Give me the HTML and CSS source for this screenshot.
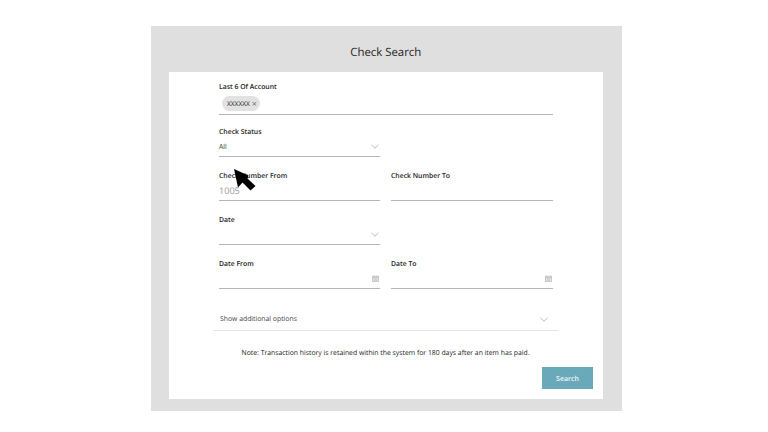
FILE: index.html
```html
<!DOCTYPE html>
<html lang="en">
<head>
<meta charset="utf-8">
<title>Check Search</title>
<link rel="stylesheet" href="styles.css">
</head>
<body>
<main class="panel">
  <h1 class="title">Check Search</h1>
  <section class="card">
    <form class="form">
      <div class="row first">
        <div class="field">
          <div class="label">Last 6 Of Account</div>
          <div class="control"><span class="chip">XXXXXX<span class="chip-x">×</span></span></div>
        </div>
      </div>
      <div class="row half">
        <div class="field">
          <div class="label">Check Status</div>
          <div class="control"><span class="value">All</span>
            <svg class="chev" viewBox="0 0 8 5"><path d="M.5.8 4 4.2 7.5.8"/></svg></div>
        </div>
      </div>
      <div class="row cols">
        <div class="field">
          <div class="label">Check Number From</div>
          <div class="control"><span class="placeholder">1005</span></div>
        </div>
        <div class="field">
          <div class="label">Check Number To</div>
          <div class="control"></div>
        </div>
      </div>
      <div class="row half">
        <div class="field">
          <div class="label">Date</div>
          <div class="control"><svg class="chev" viewBox="0 0 8 5"><path d="M.5.8 4 4.2 7.5.8"/></svg></div>
        </div>
      </div>
      <div class="row cols">
        <div class="field">
          <div class="label">Date From</div>
          <div class="control"><svg class="cal" viewBox="0 0 8 8"><path d="M.5 1.5h7v6h-7zM.5 3h7M2 .5v1M6 .5v1M2 4.5h4M2 6h4"/></svg></div>
        </div>
        <div class="field">
          <div class="label">Date To</div>
          <div class="control"><svg class="cal" viewBox="0 0 8 8"><path d="M.5 1.5h7v6h-7zM.5 3h7M2 .5v1M6 .5v1M2 4.5h4M2 6h4"/></svg></div>
        </div>
      </div>
      <div class="accordion"><span>Show additional options</span>
        <svg class="chev" viewBox="0 0 8 5"><path d="M.5.8 4 4.2 7.5.8"/></svg></div>
      <p class="note">Note: Transaction history is retained within the system for 180 days after an item has paid.</p>
    </form>
    <div class="actions"><button class="search" type="button">Search</button></div>
  </section>
  <svg class="cursor" viewBox="0 0 23 23"><path d="M1 1 5 19.5 9.5 14.5 17.5 22.5 22.5 18 14.5 10.5 15.5 7.5Z"/></svg>
</main>
</body>
</html>
```
FILE: styles.css
```css
* { box-sizing: border-box; }
html, body { margin: 0; height: 100%; background: #fff; }
body {
  font-family: "Open Sans", "Liberation Sans", sans-serif;
  color: #2b2b2b;
  text-rendering: geometricPrecision;
  padding: 26px 146px 21px 151px;
}
.panel {
  position: relative;
  width: 471px;
  height: 385px;
  background: #dfdfdf;
  padding: 0 19px 12px 17.5px;
  display: flex;
  flex-direction: column;
  opacity: .999;
}
.title {
  margin: 0;
  flex: none;
  height: 46px;
  padding-top: 17px;
  font-size: 11.4px;
  line-height: 20px;
  font-weight: 400;
  text-align: center;
  color: #222;
}
.card {
  flex: 1;
  background: #fff;
  padding: 10px 10px 10px 44.5px;
  display: flex;
  flex-direction: column;
}
.form { width: 345px; display: flex; flex-direction: column; }
.row { width: 334px; margin-left: 6px; height: 44px; flex: none; }
.first { height: 44.5px; }
.half { width: 161px; }
.cols { display: grid; grid-template-columns: 161px 162px; column-gap: 11px; }
.field { display: flex; flex-direction: column; height: 100%; }
.label {
  height: 11px;
  padding-top: 1px;
  font-size: 6.85px;
  line-height: 10px;
  font-weight: 600;
  color: #222;
}
.control {
  height: 19.5px;
  border-bottom: 1px solid #b5b5b5;
  display: flex;
  align-items: center;
  justify-content: space-between;
}
.first .control { height: 22px; align-items: flex-start; padding: 3px 0 0 2.5px; }
.value { font-size: 6.85px; color: #444; padding-top: 1px; }
.placeholder { font-size: 9.1px; color: #999; line-height: 14px; }
.chip {
  display: inline-flex;
  align-items: center;
  height: 15px;
  padding: 0 3px 0 5.5px;
  border-radius: 8px;
  background: #e2e2e2;
  font-size: 6.6px;
  color: #222;
}
.chip-x { margin-left: 2px; font-size: 9px; line-height: 1; color: #666; }
.chev { width: 8px; height: 5px; margin: 0 1px 0 auto; fill: none; stroke: #aaa; stroke-width: .8; }
.cal { width: 7px; height: 7px; margin: 0 1px 0 auto; fill: #eee; stroke: #aaa; stroke-width: .7; }
.accordion {
  height: 28.5px;
  width: 345px;
  padding: 6px 9px 0 7px;
  display: flex;
  align-items: center;
  justify-content: space-between;
  border-bottom: 1px solid #e4e4e4;
  font-size: 6.85px;
  color: #444;
}
.note {
  margin: 16.5px 0 0;
  font-size: 6.85px;
  line-height: 11px;
  text-align: center;
  color: #222;
}
.actions { display: flex; justify-content: flex-end; margin-top: 8.5px; }
.search {
  width: 51px;
  height: 22px;
  border: 0;
  padding: 2px 0 0;
  background: #69a9b9;
  color: #f2f7f8;
  font: 600 7px "Open Sans", sans-serif;
  text-rendering: geometricPrecision;
}
.cursor {
  position: absolute;
  left: 82px;
  top: 142px;
  width: 23px;
  height: 23px;
  fill: #000;
}
```
